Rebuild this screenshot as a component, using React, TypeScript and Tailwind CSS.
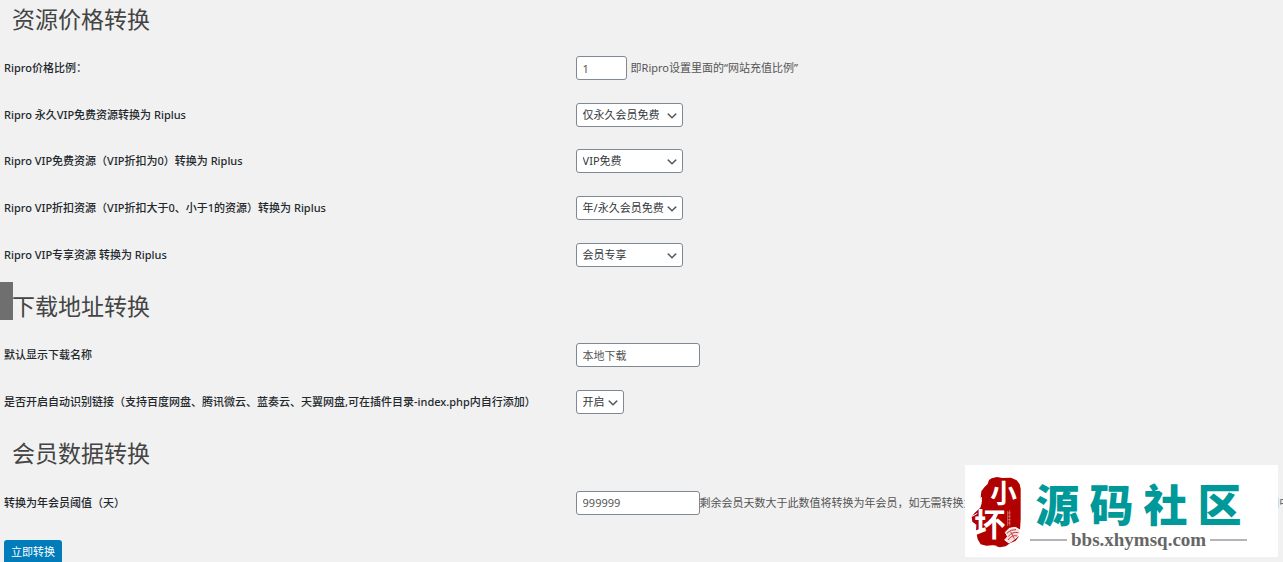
import React from 'react';

const priceRows = [
  {
    id: 'vip-forever',
    label: 'Ripro 永久VIP免费资源转换为 Riplus',
    options: ['仅永久会员免费', 'VIP免费', '会员专享'],
  },
  {
    id: 'vip-free',
    label: 'Ripro VIP免费资源（VIP折扣为0）转换为 Riplus',
    options: ['VIP免费', '仅永久会员免费', '会员专享'],
  },
  {
    id: 'vip-discount',
    label: 'Ripro VIP折扣资源（VIP折扣大于0、小于1的资源）转换为 Riplus',
    options: ['年/永久会员免费', '仅永久会员免费', 'VIP免费'],
  },
  {
    id: 'vip-only',
    label: 'Ripro VIP专享资源 转换为 Riplus',
    options: ['会员专享', 'VIP免费', '仅永久会员免费'],
  },
];

const inputClass =
  'h-6 rounded-[3px] border border-[#7e8993] bg-white px-1.5 text-[11px] text-[#555]';

type SelectProps = { id: string; options: string[]; className: string };

const Select = ({ id, options, className }: SelectProps) => (
  <div className={`relative ${className}`}>
    <select
      id={id}
      className="block h-6 w-full appearance-none rounded-[3px] border border-[#7e8993] bg-white pl-1.5 text-[11px] text-[#32373c]"
    >
      {options.map((option) => (
        <option key={option}>{option}</option>
      ))}
    </select>
    <svg
      viewBox="0 0 20 20"
      className="pointer-events-none absolute right-1 top-1.5 h-3.5 w-3.5"
      aria-hidden="true"
    >
      <path d="M5 6l5 5 5-5 2 1-7 7-7-7 2-1z" fill="#555" />
    </svg>
  </div>
);

type RowProps = { id: string; label: string; children: React.ReactNode };

const Row = ({ id, label, children }: RowProps) => (
  <tr>
    <th scope="row" className="w-[45%] pl-1 text-left font-medium text-[#23282d]">
      <label htmlFor={id}>{label}</label>
    </th>
    <td>
      <div className="flex items-center whitespace-nowrap">{children}</div>
    </td>
  </tr>
);

const Heading = ({ children }: { children: React.ReactNode }) => (
  <h2 className="pl-3 text-[23px] leading-8 text-[#444]">{children}</h2>
);

const Watermark = () => (
  <div className="absolute bottom-[5px] right-[5px] flex h-[92px] w-[313px] items-center bg-white">
    <svg viewBox="0 0 195 255" className="h-[85px] w-[65px] shrink-0" aria-hidden="true">
      <path
        d="M80 28L96 24L112 27L138 26L155 34L164 46L167 60L167 150L165 184L160 205L151 216L136 222L122 232L104 235L84 229L64 230L47 226L38 211L33 187L34 167L22 158L20 144L28 133L36 125L46 116L50 103L47 85L49 67L58 55L68 45L72 33Z"
        fill="#b00000"
      />
      <path
        d="M22 142L37 133M49 100L49 84M78 232L94 231M121 190L133 178L151 175L165 183L160 201L144 214L132 222L119 213L128 203Z"
        fill="#f7dede"
        stroke="#fff"
        strokeWidth="3"
      />
      <path
        d="M125 193Q138 180 153 182M130 202Q143 187 160 191M129 213Q141 196 157 201M137 188L148 209"
        fill="none"
        stroke="#c43b3b"
        strokeWidth="3"
      />
      <path
        d="M128 126V171M134 123V170M128 132H137M128 142H137M128 152H137M128 162H137"
        fill="none"
        stroke="#e08b8b"
        strokeWidth="2"
      />
      <text x="76" y="103" fontSize="80" fontWeight="700" fill="#fff">小</text>
      <text x="27" y="202" fontSize="94" fontWeight="700" fill="#fff">坏</text>
    </svg>
    <div className="flex flex-col items-center pt-2">
      <div className="flex gap-2.5 text-[44px] font-black leading-[50px] text-[#009999]">
        <span>源</span>
        <span>码</span>
        <span>社</span>
        <span>区</span>
      </div>
      <div className="flex items-center gap-1">
        <span className="h-0.5 w-[37px] bg-[#b4b3b9]" />
        <span className="font-['Liberation_Serif',serif] text-[19px] font-bold leading-5 text-[#666]">
          bbs.xhymsq.com
        </span>
        <span className="h-0.5 w-[37px] bg-[#b4b3b9]" />
      </div>
    </div>
  </div>
);

const App = () => {
  return (
    <main className="relative h-screen overflow-hidden bg-[#f1f1f1] pr-1 pt-[3px] font-['Noto_Sans','Noto_Sans_CJK_SC',sans-serif] text-[11px] leading-4 text-[#555]">
      <form onSubmit={(e) => e.preventDefault()}>
        <Heading>资源价格转换</Heading>
        <table className="mt-2.5 h-[233px] w-full table-fixed">
          <tbody>
            <Row id="ratio" label="Ripro价格比例：">
              <input id="ratio" defaultValue="1" className={`${inputClass} mr-1 w-[51px]`} />
              <span>即Ripro设置里面的“网站充值比例”</span>
            </Row>
            {priceRows.map((row) => (
              <Row key={row.id} id={row.id} label={row.label}>
                <Select id={row.id} options={row.options} className="w-[107px]" />
              </Row>
            ))}
          </tbody>
        </table>

        <div className="relative mt-3">
          <div className="absolute -top-2 left-0 h-[38px] w-[13px] bg-[#6f6f6f]" />
          <Heading>下载地址转换</Heading>
        </div>
        <table className="mt-2.5 h-[93px] w-full table-fixed">
          <tbody>
            <Row id="name" label="默认显示下载名称">
              <input id="name" defaultValue="本地下载" className={`${inputClass} w-[124px]`} />
            </Row>
            <Row
              id="detect"
              label="是否开启自动识别链接（支持百度网盘、腾讯微云、蓝奏云、天翼网盘,可在插件目录-index.php内自行添加）"
            >
              <Select id="detect" options={['开启', '关闭']} className="w-12" />
            </Row>
          </tbody>
        </table>

        <div className="mt-3">
          <Heading>会员数据转换</Heading>
        </div>
        <table className="mt-2.5 h-[47px] w-full table-fixed">
          <tbody>
            <Row id="days" label="转换为年会员阈值（天）">
              <input id="days" defaultValue="999999" className={`${inputClass} w-[124px]`} />
              <span>
                剩余会员天数大于此数值将转换为年会员，如无需转换为年会员请保持默认数值 999999即可，其余会员天数将继续使用中
              </span>
            </Row>
          </tbody>
        </table>

        <button
          type="submit"
          className="ml-1 mt-3.5 h-6 rounded-[3px] bg-[#007cba] px-[7px] text-[11px] text-white"
        >
          立即转换
        </button>
      </form>
      <Watermark />
    </main>
  );
};

export default App;
